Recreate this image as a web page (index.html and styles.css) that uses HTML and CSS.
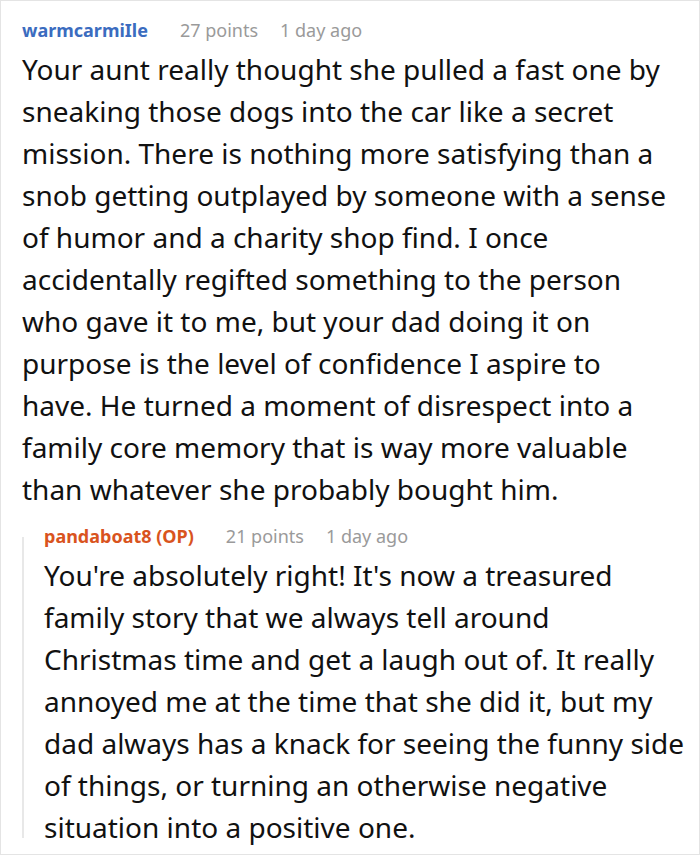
FILE: index.html
```html
<!DOCTYPE html>
<html>
<head>
<meta charset="utf-8">
<link rel="stylesheet" href="styles.css">
</head>
<body>
<div class="frame">
  <div class="comment">
    <div class="meta">
      <span class="user">warmcarmiIle</span>
      <span class="info">27 points</span>
      <span class="info">1 day ago</span>
    </div>
    <p class="text">Your aunt really thought she pulled a fast one by sneaking those dogs into the car like a secret mission. There is nothing more satisfying than a snob getting outplayed by someone with a sense of humor and a charity shop find. I once accidentally regifted something to the person who gave it to me, but your dad doing it on purpose is the level of confidence I aspire to have. He turned a moment of disrespect into a family core memory that is way more valuable than whatever she probably bought him.</p>
    <div class="reply">
      <div class="meta">
        <span class="user op">pandaboat8 (OP)</span>
        <span class="info">21 points</span>
        <span class="info">1 day ago</span>
      </div>
      <p class="text">You're absolutely right! It's now a treasured family story that we always tell around Christmas time and get a laugh out of. It really annoyed me at the time that she did it, but my dad always has a knack for seeing the funny side of things, or turning an otherwise negative situation into a positive one.</p>
    </div>
  </div>
</div>
</body>
</html>
```
FILE: styles.css
```css
html, body {
  margin: 0;
  padding: 0;
  background: #ffffff;
}
.frame {
  width: 700px;
  height: 855px;
  box-sizing: border-box;
  border: 1px solid #e4e4e4;
  overflow: hidden;
  font-family: "Noto Sans", "Open Sans", sans-serif;
  color: #111111;
}
.comment {
  padding: 15px 22px 0 21px;
}
.meta {
  display: flex;
  font-size: 18px;
  line-height: 28px;
}
.user {
  font-weight: 700;
  color: #3b6cbf;
  margin-right: 32px;
}
.user.op {
  color: #d9541e;
}
.info {
  color: #9a9a9a;
  margin-right: 22px;
}
.text {
  margin: 0;
  font-size: 28px;
  line-height: 42px;
  padding-top: 4px;
}
.reply {
  margin-top: 12px;
  margin-right: -12px;
  padding-left: 22px;
  background: linear-gradient(#e8e8e8, #e8e8e8) no-repeat 0 15px / 2px calc(100% - 25px);
}
```
